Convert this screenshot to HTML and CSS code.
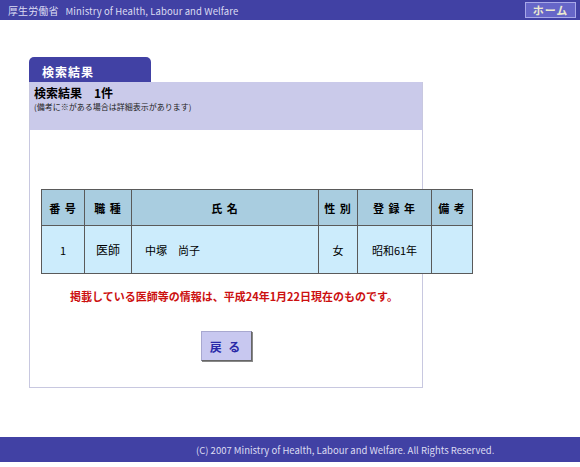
FILE: index.html
```html
<!DOCTYPE html>
<html lang="ja">
<head>
<meta charset="utf-8">
<title>検索結果</title>
<link rel="stylesheet" href="styles.css">
</head>
<body>
<div class="header">
  <div class="brand"><span class="brand-ja">厚生労働省</span>Ministry of Health, Labour and Welfare</div>
  <a class="home" href="#">ホーム</a>
</div>
<div class="main">
  <div class="tab">検索結果</div>
  <div class="panel">
    <div class="band">
      <div class="count">検索結果　1件</div>
      <div class="note">(備考に※がある場合は詳細表示があります)</div>
    </div>
    <table class="result">
      <tr class="head">
        <th class="c1">番 号</th>
        <th class="c2">職 種</th>
        <th class="c3">氏 名</th>
        <th class="c4">性 別</th>
        <th class="c5">登 録 年</th>
        <th class="c6">備 考</th>
      </tr>
      <tr class="row">
        <td class="center">1</td>
        <td class="center big">医師</td>
        <td class="name">中塚　尚子</td>
        <td class="center">女</td>
        <td class="center">昭和61年</td>
        <td></td>
      </tr>
    </table>
    <p class="notice">掲載している医師等の情報は、平成24年1月22日現在のものです。</p>
    <div class="actions"><button class="back" type="button">戻 る</button></div>
  </div>
</div>
<div class="footer">(C) 2007 Ministry of Health, Labour and Welfare. All Rights Reserved.</div>
</body>
</html>
```
FILE: styles.css
```css
html, body {
  margin: 0;
  padding: 0;
  background: #ffffff;
  font-family: "Noto Sans CJK JP", "DejaVu Sans", sans-serif;
  color: #000;
}
.header {
  height: 20px;
  background: #4141a4;
  display: flex;
  align-items: center;
  justify-content: space-between;
  padding: 0 4px 0 8px;
}
.brand {
  color: #dcdcf2;
  font-size: 9.5px;
  letter-spacing: 0.1px;
}
.brand-ja {
  font-size: 10px;
  margin-right: 7px;
}
.home {
  display: flex;
  align-items: center;
  justify-content: center;
  width: 49px;
  height: 14px;
  border: 1px solid #a8a8e8;
  background: #6666c8;
  color: #ecead0;
  font-size: 11px;
  font-weight: bold;
  text-decoration: none;
  letter-spacing: 1px;
}
.main {
  padding: 37px 0 0 29px;
  height: 380px;
  box-sizing: border-box;
}
.tab {
  width: 122px;
  height: 25px;
  box-sizing: border-box;
  background: #4141a4;
  color: #fff;
  border-radius: 5px 5px 0 0;
  font-size: 12px;
  font-weight: bold;
  padding: 6px 0 0 13px;
  letter-spacing: 1px;
}
.panel {
  width: 394px;
  height: 306px;
  box-sizing: border-box;
  border: 1px solid #c8c8e0;
  border-top: none;
}
.band {
  height: 48px;
  background: #cacaea;
  box-sizing: border-box;
  padding: 3px 4px 0 4px;
}
.count {
  font-size: 12px;
  font-weight: bold;
  line-height: 16px;
}
.note {
  font-size: 8px;
  line-height: 11px;
  color: #222;
}
.result {
  margin: 59px 0 0 11px;
  width: 432px;
  border-collapse: collapse;
  font-size: 11px;
}
.result th, .result td {
  border: 1px solid #5a5a5a;
  padding: 0;
}
.head {
  height: 36px;
  background: #a9cde0;
}
.head th {
  font-weight: bold;
  font-size: 11px;
  letter-spacing: 1px;
}
.row {
  height: 48px;
  background: #ccecfc;
}
.c1 { width: 42px; }
.c2 { width: 46px; }
.c3 { width: 186px; }
.c4 { width: 38px; }
.c5 { width: 73px; }
.c6 { width: 40px; }
.center { text-align: center; }
.big { font-size: 12px; }
.name { padding-left: 13px !important; }
.notice {
  margin: 14px 0 0 16px;
  text-align: center;
  color: #cc1010;
  font-size: 11px;
  font-weight: bold;
}
.actions {
  display: flex;
  justify-content: center;
  margin-top: 27px;
}
.back {
  width: 51px;
  height: 30px;
  background: #c8c8f0;
  border: 1px solid #a8a8d0;
  border-right-color: #666;
  border-bottom-color: #666;
  box-shadow: 1px 1px 0 #888;
  color: #2828a8;
  font-family: "Noto Sans CJK JP", sans-serif;
  font-size: 12px;
  font-weight: bold;
  letter-spacing: 2px;
  padding: 0;
}
.footer {
  margin-top: 37px;
  height: 25px;
  background: #4141a4;
  color: #dcdcf2;
  font-size: 9.5px;
  display: flex;
  align-items: center;
  padding-left: 196px;
}
```
